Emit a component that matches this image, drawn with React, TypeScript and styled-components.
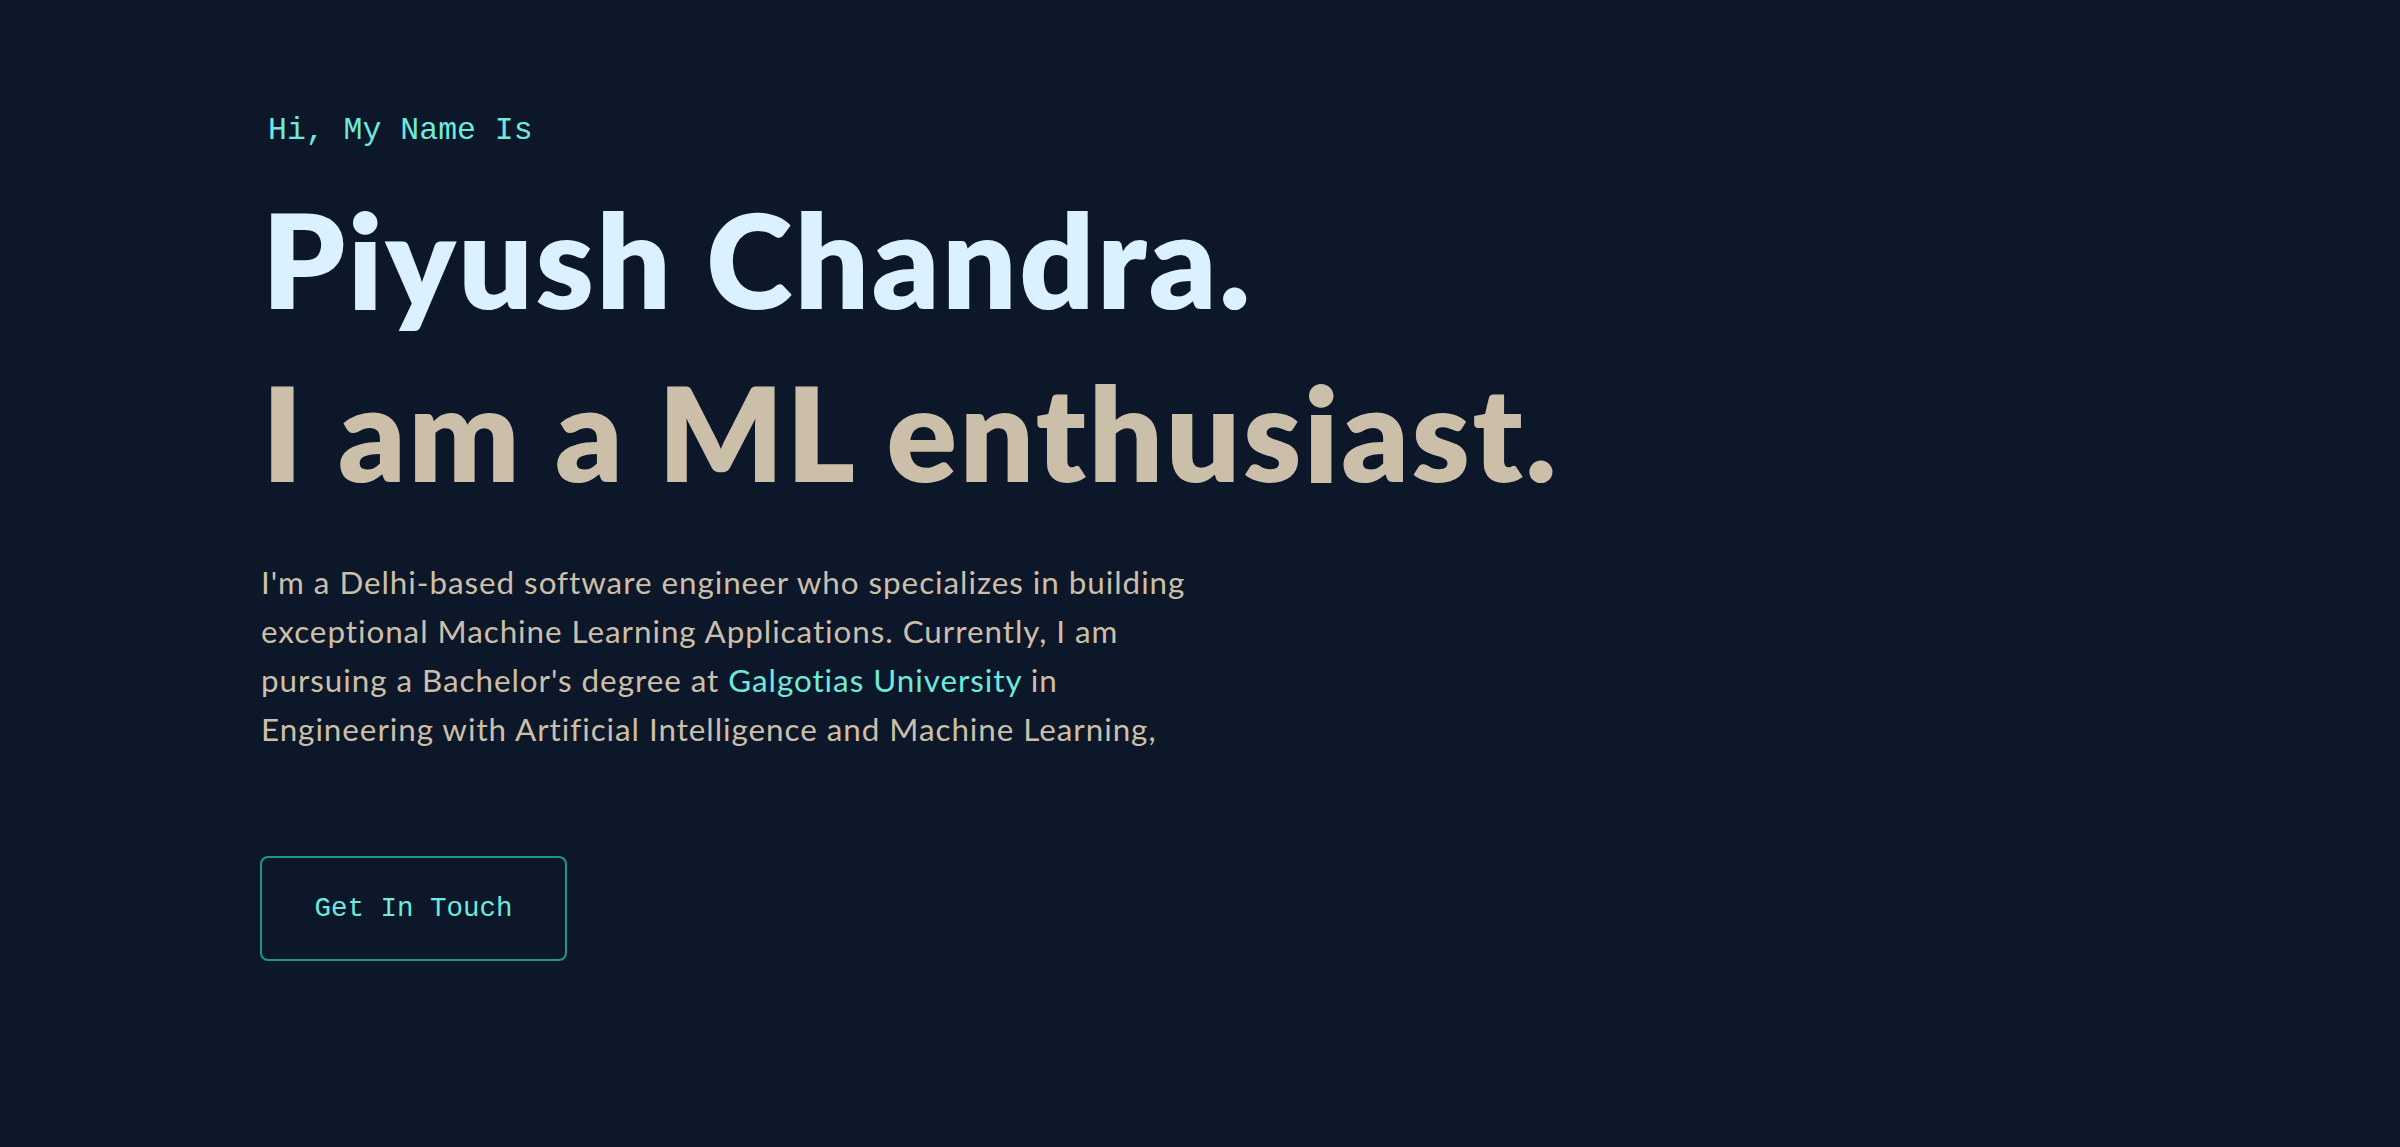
import React from "react";
import styled, { createGlobalStyle } from "styled-components";

const GlobalStyle = createGlobalStyle`
  html, body {
    margin: 0;
    padding: 0;
    background: #0c1729;
  }
  * { box-sizing: border-box; }
`;

const Page = styled.main`
  min-height: 100vh;
  background: #0c1729;
  display: flex;
  flex-direction: column;
`;

const Hero = styled.section`
  display: flex;
  flex-direction: column;
  align-items: flex-start;
  padding: 111px 0 0 260px;
`;

const Intro = styled.h1`
  margin: 0 0 0 8px;
  font-family: "Liberation Mono", "DejaVu Sans Mono", monospace;
  font-weight: 400;
  font-size: 31.5px;
  line-height: 40px;
  color: #6fe9dc;
`;

const BigHeading = styled.h2<{ $tone: "light" | "tan"; $gap: number }>`
  margin: ${(p) => p.$gap}px 0 0 2px;
  font-family: "Lato", "Noto Sans", sans-serif;
  font-weight: 800;
  font-size: 131px;
  line-height: 144px;
  letter-spacing: 2.5px;
  color: ${(p) => (p.$tone === "light" ? "#dbf1fe" : "#ccbfaa")};
  white-space: nowrap;
`;

const About = styled.p`
  margin: 54px 0 0 1px;
  font-family: "Lato", "Noto Sans", sans-serif;
  font-weight: 400;
  font-size: 31.4px;
  line-height: 49px;
  letter-spacing: 0.95px;
  color: #ccbfaa;
  white-space: nowrap;
`;

const Highlight = styled.a`
  color: #6fe9dc;
  text-decoration: none;
`;

const ContactButton = styled.a`
  margin-top: 102px;
  display: inline-flex;
  align-items: center;
  justify-content: center;
  width: 307px;
  height: 105px;
  border: 2px solid #1c9a7c;
  border-radius: 8px;
  font-family: "Liberation Mono", "DejaVu Sans Mono", monospace;
  font-size: 27.5px;
  line-height: 1;
  color: #6fe9dc;
  text-decoration: none;
  background: transparent;
`;

export default function App() {
  return (
    <>
      <GlobalStyle />
      <Page>
        <Hero>
          <Intro>Hi, My Name Is</Intro>
          <BigHeading $tone="light" $gap={36}>Piyush Chandra.</BigHeading>
          <BigHeading $tone="tan" $gap={29}>I am a ML enthusiast.</BigHeading>
          <About>
            I'm a Delhi-based software engineer who specializes in building
            <br />
            exceptional Machine Learning Applications. Currently, I am
            <br />
            pursuing a Bachelor's degree at{" "}
            <Highlight href="#">Galgotias University</Highlight> in
            <br />
            Engineering with Artificial Intelligence and Machine Learning,
          </About>
          <ContactButton href="#">Get In Touch</ContactButton>
        </Hero>
      </Page>
    </>
  );
}
